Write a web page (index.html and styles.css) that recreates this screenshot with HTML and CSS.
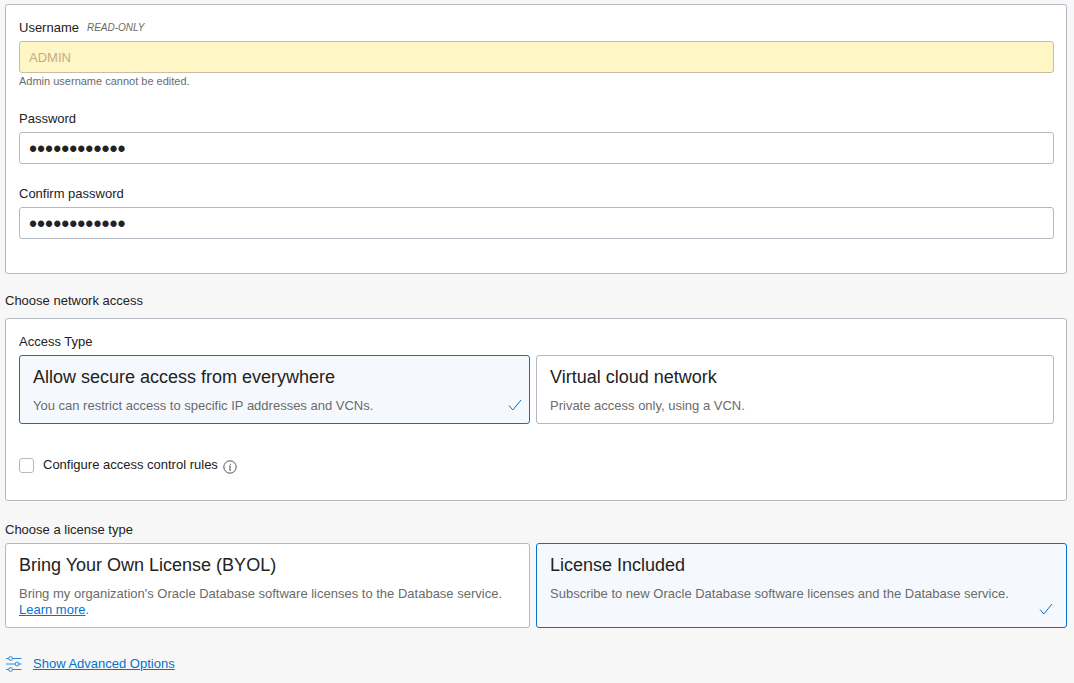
FILE: index.html
```html
<!DOCTYPE html>
<html lang="en">
<head>
<meta charset="utf-8">
<meta name="viewport" content="width=device-width, initial-scale=1">
<title>Create Autonomous Database</title>
<link rel="stylesheet" href="styles.css">
</head>
<body>
<form class="page">
  <section class="card credentials">
    <div class="field">
      <div class="label-row">
        <label for="username">Username</label>
        <em class="readonly-tag">READ-ONLY</em>
      </div>
      <input class="text-input readonly" id="username" type="text" value="ADMIN" readonly aria-describedby="username-hint">
      <p class="hint" id="username-hint">Admin username cannot be edited.</p>
    </div>
    <div class="field">
      <div class="label-row"><label for="password">Password</label></div>
      <input class="text-input password" id="password" type="password" value="abcdefghijkl">
    </div>
    <div class="field">
      <div class="label-row"><label for="confirm">Confirm password</label></div>
      <input class="text-input password" id="confirm" type="password" value="abcdefghijkl">
    </div>
  </section>

  <h2 class="section-title network-title">Choose network access</h2>
  <section class="card network">
    <div class="label-row" id="access-type">Access Type</div>
    <div class="options access-options" role="radiogroup" aria-labelledby="access-type">
      <label class="option">
        <input class="option-radio" type="radio" name="access" checked>
        <span class="option-title">Allow secure access from everywhere</span>
        <span class="option-text">You can restrict access to specific IP addresses and VCNs.</span>
        <svg class="check" viewBox="0 0 14 12" aria-hidden="true"><path d="M1 6.5 4.8 11 13 1"/></svg>
      </label>
      <label class="option">
        <input class="option-radio" type="radio" name="access">
        <span class="option-title">Virtual cloud network</span>
        <span class="option-text">Private access only, using a VCN.</span>
      </label>
    </div>
    <div class="rules">
      <input class="checkbox" id="rules" type="checkbox">
      <label for="rules">Configure access control rules</label>
      <svg class="info" viewBox="0 0 14 14" role="img" aria-label="Information"><circle cx="7" cy="7" r="6.2"/><path d="M6 6.2H7.3L6.7 10.2H8M7.4 3.8V4.9"/></svg>
    </div>
  </section>

  <h2 class="section-title license-title" id="license-type">Choose a license type</h2>
  <div class="options license-options" role="radiogroup" aria-labelledby="license-type">
    <label class="option">
      <input class="option-radio" type="radio" name="license">
      <span class="option-title">Bring Your Own License (BYOL)</span>
      <span class="option-text">Bring my organization's Oracle Database software licenses to the Database service. <a class="link" href="#">Learn more</a>.</span>
    </label>
    <label class="option">
      <input class="option-radio" type="radio" name="license" checked>
      <span class="option-title">License Included</span>
      <span class="option-text">Subscribe to new Oracle Database software licenses and the Database service.</span>
      <svg class="check check-inset" viewBox="0 0 14 12" aria-hidden="true"><path d="M1 6.5 4.8 11 13 1"/></svg>
    </label>
  </div>

  <div class="advanced">
    <svg class="sliders" viewBox="0 0 17 17" aria-hidden="true">
      <path d="M1 3.5H3.5M7.5 3.5H16.5M1 9H10M14 9H16.5M1 14.5H3.5M7.5 14.5H16.5"/>
      <circle cx="5.5" cy="3.5" r="1.9"/><circle cx="12" cy="9" r="1.9"/><circle cx="5.5" cy="14.5" r="1.9"/>
    </svg>
    <a class="link" href="#">Show Advanced Options</a>
  </div>
</form>
</body>
</html>
```
FILE: styles.css
```css
* {
  box-sizing: border-box;
}

body {
  margin: 0;
  background: #f7f7f7;
  color: #222;
  font-family: "Liberation Sans", Arial, sans-serif;
  font-size: 13px;
  line-height: 16px;
}

.page {
  padding: 4px 7px 8px 5px;
}

.card {
  padding: 15px 12px 0 13px;
  border: 1px solid #b3b9c3;
  border-radius: 3px;
  background: #fff;
}

.credentials {
  display: flex;
  flex-direction: column;
  gap: 22px;
  padding-bottom: 34px;
}

.label-row {
  display: flex;
  align-items: center;
  gap: 8px;
  min-height: 16px;
}

.readonly-tag {
  color: #6b6b6b;
  font-size: 10px;
}

.text-input {
  display: block;
  width: 100%;
  height: 32px;
  margin-top: 5px;
  padding: 0 9px;
  border: 1px solid #b3b9c3;
  border-radius: 3px;
  background: #fff;
  color: #222;
  font: inherit;
}

.readonly {
  border-color: #c9bf9c;
  background: #fff6c6;
  color: #c5ab86;
}

.password {
  padding-top: 3px;
  font-size: 23px;
}

.hint {
  margin: 0;
  color: #6b6b6b;
  font-size: 11px;
}

.section-title {
  margin: 0;
  font-size: 13px;
  font-weight: normal;
}

.network-title {
  padding: 19px 0 9px;
}

.license-title {
  padding: 21px 0 5px;
}

.network {
  padding-bottom: 26px;
}

.options {
  display: grid;
  gap: 6px;
}

.access-options {
  grid-template-columns: 511fr 518fr;
  margin-top: 5px;
}

.license-options {
  grid-template-columns: 525fr 531fr;
}

.option {
  position: relative;
  display: flex;
  flex-direction: column;
  gap: 9px;
  padding: 9px 13px;
  border: 1px solid #b3b9c3;
  border-radius: 3px;
  background: #fff;
}

.option:has(:checked) {
  border-color: #0572ce;
  background: #f5f9fe;
}

.option-radio {
  position: absolute;
  inset: 0;
  margin: 0;
  opacity: 0;
}

.option-title {
  font-size: 18px;
  line-height: 24px;
}

.option-text {
  color: #6b6b6b;
}

.check {
  position: absolute;
  right: 7px;
  bottom: 12px;
  width: 14px;
  height: 12px;
  fill: none;
  stroke: #0572ce;
}

.check-inset {
  right: 13px;
}

.rules {
  display: flex;
  align-items: center;
  margin-top: 32px;
}

.checkbox {
  appearance: none;
  width: 15px;
  height: 15px;
  margin: 0 9px 0 0;
  border: 1px solid #b3b9c3;
  border-radius: 3px;
  background: #fff;
}

.checkbox:checked {
  background: #0572ce;
}

.info {
  width: 14px;
  height: 14px;
  margin: 4px 0 0 5px;
  fill: none;
  stroke: #555;
}

.link {
  position: relative;
  color: #0572ce;
  text-decoration: underline;
}

.advanced {
  display: flex;
  align-items: center;
  gap: 11px;
  margin-top: 27px;
}

.sliders {
  width: 17px;
  height: 17px;
  fill: none;
  stroke: #2f88d6;
}
```
